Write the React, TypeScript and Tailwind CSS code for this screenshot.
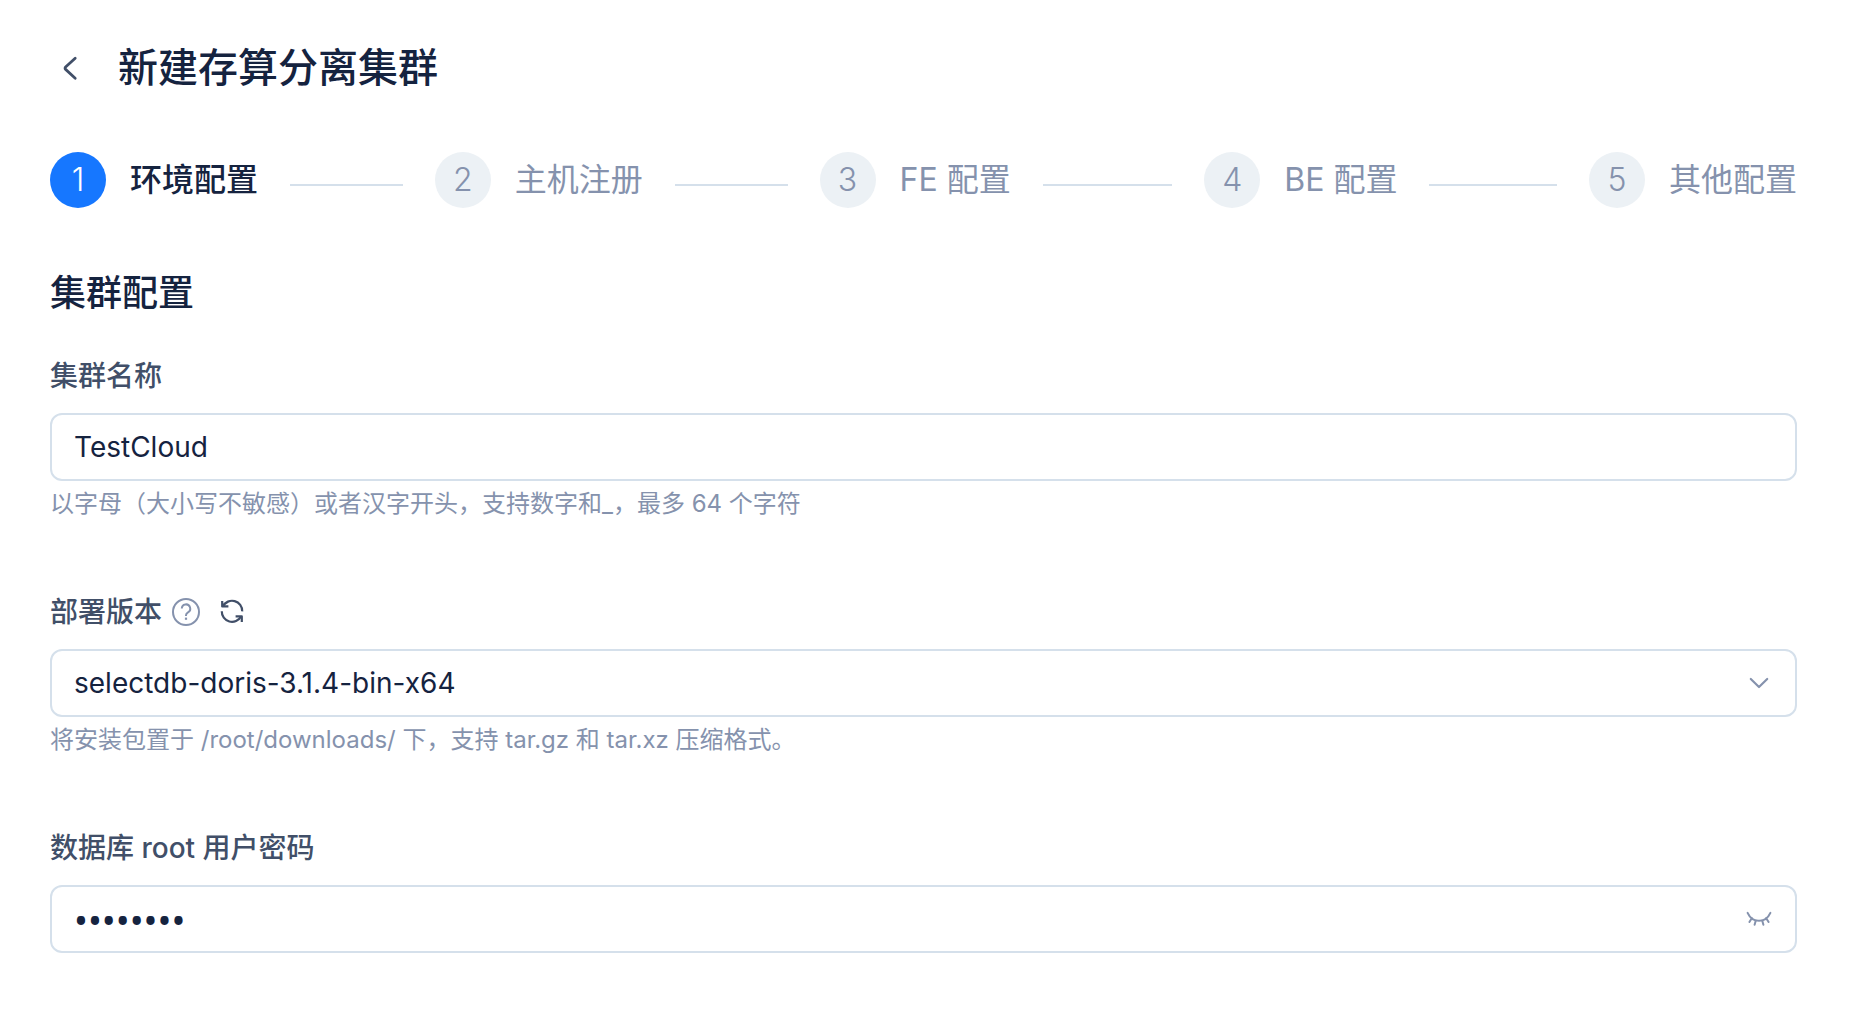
import React, { useState } from "react";

const steps = ["环境配置", "主机注册", "FE 配置", "BE 配置", "其他配置"];

const versions = ["selectdb-doris-3.1.4-bin-x64"];

const controlClass =
  "block h-[68px] w-full appearance-none rounded-xl border-2 border-[#d5e0eb] bg-white pl-[22px] pr-20 text-[#15233f] outline-none focus:border-[#1677ff]";

export default function App() {
  const [name, setName] = useState("TestCloud");
  const [version, setVersion] = useState(versions[0]);
  const [password, setPassword] = useState("12345678");
  const [showPassword, setShowPassword] = useState(false);

  return (
    <main className="min-h-screen bg-white pt-11 pr-[69px] pb-16 pl-[50px] font-['Inter','Noto_Sans_CJK_SC',sans-serif] text-[#15233f]">
      <header className="flex items-center gap-7">
        <button
          type="button"
          aria-label="返回"
          className="flex size-10 items-center justify-center text-[#414f68]"
        >
          <BackIcon />
        </button>
        <h1 className="text-[40px] leading-[48px] font-medium">
          新建存算分离集群
        </h1>
      </header>

      <Steps current={0} />

      <h2 className="mt-15 text-[36px] leading-[50px] font-medium">
        集群配置
      </h2>

      <form
        className="mt-[38px] space-y-[69px]"
        onSubmit={(e) => e.preventDefault()}
      >
        <Field
          id="cluster-name"
          label="集群名称"
          hint="以字母（大小写不敏感）或者汉字开头，支持数字和_，最多 64 个字符"
        >
          <input
            id="cluster-name"
            type="text"
            value={name}
            onChange={(e) => setName(e.target.value)}
            className={`${controlClass} text-[28px]`}
          />
        </Field>

        <Field
          id="version"
          label="部署版本"
          hint="将安装包置于 /root/downloads/ 下，支持 tar.gz 和 tar.xz 压缩格式。"
          extra={
            <>
              <button
                type="button"
                aria-label="帮助"
                className="ml-2.5 text-[#8592ad]"
              >
                <QuestionIcon />
              </button>
              <button
                type="button"
                aria-label="刷新"
                className="ml-[18px] text-[#414f68]"
              >
                <RefreshIcon />
              </button>
            </>
          }
        >
          <select
            id="version"
            value={version}
            onChange={(e) => setVersion(e.target.value)}
            className={`${controlClass} text-[28px]`}
          >
            {versions.map((v) => (
              <option key={v}>{v}</option>
            ))}
          </select>
          <span className="pointer-events-none absolute inset-y-0 right-6 flex items-center text-[#8592ad]">
            <DownIcon />
          </span>
        </Field>

        <Field id="password" label="数据库 root 用户密码">
          <input
            id="password"
            type={showPassword ? "text" : "password"}
            value={password}
            onChange={(e) => setPassword(e.target.value)}
            className={`${controlClass} ${
              showPassword
                ? "text-[28px]"
                : "font-['Noto_Sans',sans-serif] text-[37px]"
            }`}
          />
          <button
            type="button"
            aria-label="显示密码"
            onClick={() => setShowPassword(!showPassword)}
            className="absolute inset-y-0 right-6 flex items-center text-[#8592ad]"
          >
            <EyeClosedIcon />
          </button>
        </Field>
      </form>
    </main>
  );
}

function Steps({ current }: { current: number }) {
  return (
    <ol className="mt-15 flex">
      {steps.map((title, i) => (
        <li
          key={title}
          className="flex flex-1 items-center last:flex-none"
          aria-current={i === current ? "step" : undefined}
        >
          <span
            className={`flex size-14 shrink-0 items-center justify-center rounded-full text-[32px] leading-10 font-light ${
              i === current
                ? "bg-[#1677ff] text-white"
                : "bg-[#ecf1f5] text-[#8592ad]"
            }`}
          >
            {i + 1}
          </span>
          <span
            className={`ml-6 text-[32px] leading-10 whitespace-nowrap ${
              i === current ? "font-medium text-[#15233f]" : "text-[#8592ad]"
            }`}
          >
            {title}
          </span>
          {i < steps.length - 1 && (
            <span className="mx-8 mt-2.5 h-0.5 flex-1 bg-[#d5e0eb]" />
          )}
        </li>
      ))}
    </ol>
  );
}

function Field({ id, label, hint, extra, children }: any) {
  return (
    <div>
      <div className="flex items-center">
        <label
          htmlFor={id}
          className="text-[28px] leading-10 font-medium text-[#414f68]"
        >
          {label}
        </label>
        {extra}
      </div>
      <div className="relative mt-[17px]">{children}</div>
      {hint && (
        <p className="mt-1 text-[24px] leading-[38px] text-[#8592ad]">
          {hint}
        </p>
      )}
    </div>
  );
}

function BackIcon() {
  return (
    <svg
      width="40"
      height="40"
      viewBox="0 0 40 40"
      fill="none"
      stroke="currentColor"
      strokeWidth="2.8"
      strokeLinecap="round"
      strokeLinejoin="round"
    >
      <path d="M25.2 10.2 15.6 19a1.6 1.6 0 0 0 0 2.4l9.6 8.8" />
    </svg>
  );
}

function QuestionIcon() {
  return (
    <svg
      width="28"
      height="28"
      viewBox="0 0 28 28"
      fill="none"
      stroke="currentColor"
      strokeWidth="2"
    >
      <circle cx="14" cy="14" r="13" />
      <path d="M9.8 10.6a4.2 4.2 0 1 1 6.2 3.7c-1.3.7-2 1.5-2 2.9v.7" />
      <path d="M14 19.6v2.2" strokeWidth="2.2" />
    </svg>
  );
}

function RefreshIcon() {
  return (
    <svg
      width="28"
      height="28"
      viewBox="0 0 28 28"
      fill="none"
      stroke="currentColor"
      strokeWidth="2.2"
      strokeLinejoin="round"
    >
      <path d="M4.2 3v5.4h6.2" />
      <path d="M5 8.2a10.2 10.2 0 0 1 19.2 5.2" />
      <path d="M3.8 13.2A10.2 10.2 0 0 0 23 18.4" />
      <path d="M23.8 24v-5.6h-6.2" />
    </svg>
  );
}

function DownIcon() {
  return (
    <svg
      width="28"
      height="28"
      viewBox="0 0 28 28"
      fill="none"
      stroke="currentColor"
      strokeWidth="2.2"
      strokeLinecap="round"
      strokeLinejoin="round"
    >
      <path d="m5.8 10 8.2 8 8.2-8" />
    </svg>
  );
}

function EyeClosedIcon() {
  return (
    <svg
      width="28"
      height="28"
      viewBox="0 0 28 28"
      fill="none"
      stroke="currentColor"
      strokeWidth="2"
      strokeLinecap="round"
    >
      <path d="M2.6 7.8C5 13 9 15.8 14 15.8s9-2.8 11.4-8" />
      <path d="M6.8 13.2 4.4 17M10.8 15.4 9.6 19.8M17.2 15.4l1.2 4.4M21.2 13.2l2.4 3.8" />
    </svg>
  );
}
